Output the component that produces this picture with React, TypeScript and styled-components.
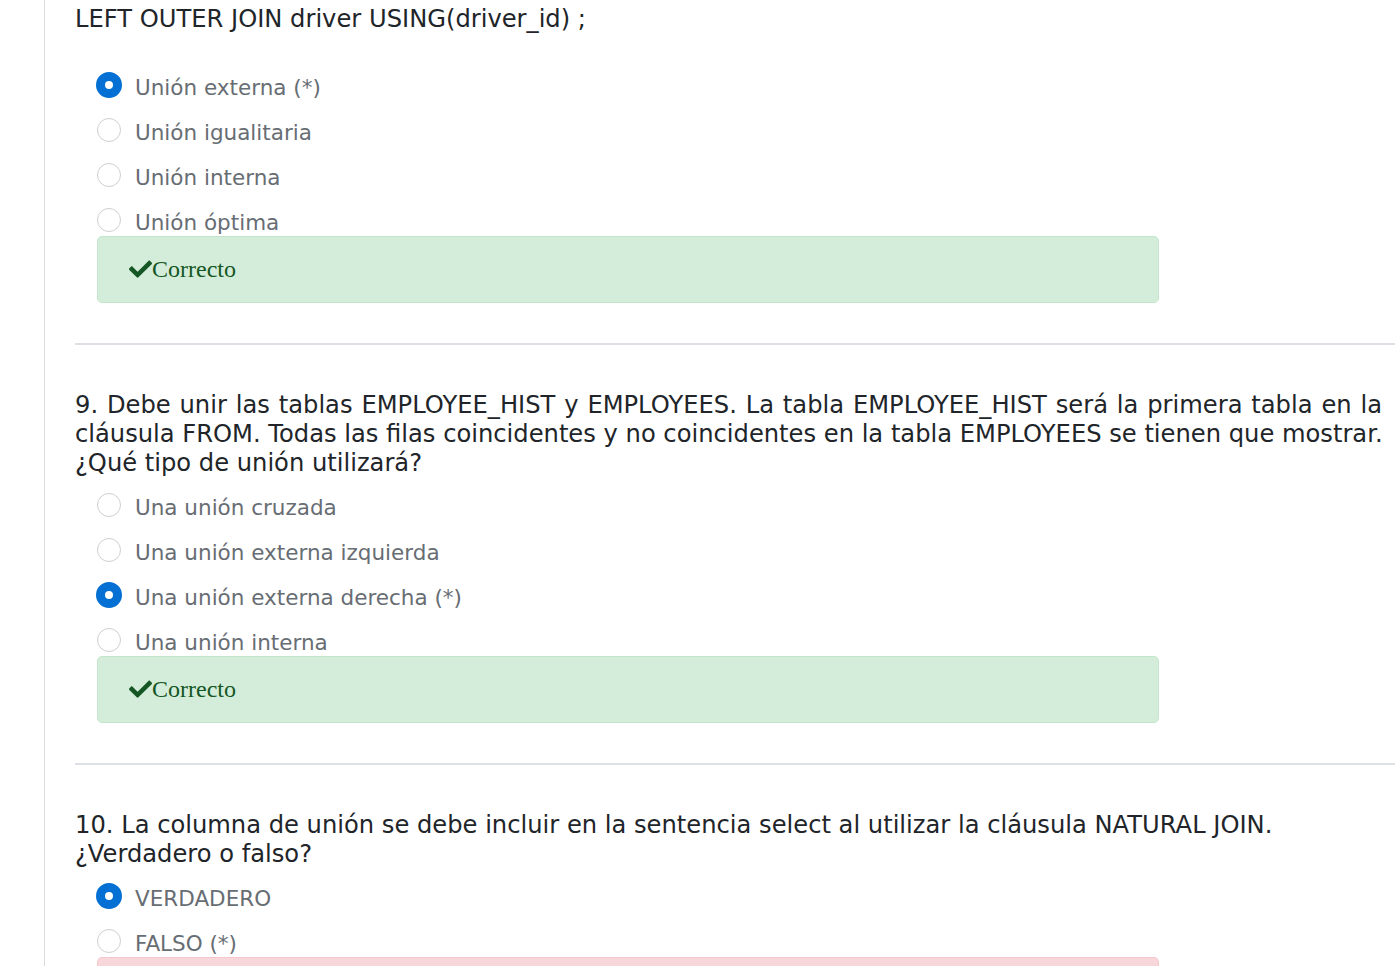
import React from "react";
import styled, { createGlobalStyle } from "styled-components";

const Global = createGlobalStyle`
  html, body { margin: 0; padding: 0; background: #fff; }
  body { font-family: "DejaVu Sans", Verdana, sans-serif; overflow: hidden; }
`;

const Page = styled.div`
  display: flex;
  min-height: 966px;
`;

const Gutter = styled.div`
  width: 44px;
  flex-shrink: 0;
  border-right: 1px solid #dcdcdc;
`;

const Content = styled.div`
  flex: 1;
  padding: 5px 0 0 30px;
  display: flex;
  flex-direction: column;
`;

const Question = styled.section`
  display: flex;
  flex-direction: column;
`;

const QText = styled.div<{ $gap: number }>`
  margin: 0 0 ${(p) => p.$gap}px 0;
  width: 1307px;
  font-size: 24.2px;
  line-height: 29px;
  color: #212529;
`;

const QLine = styled.span<{ $full: boolean }>`
  display: block;
  white-space: nowrap;
  text-align: left;
  text-align-last: ${(p) => (p.$full ? "justify" : "left")};
`;

const Options = styled.div`
  display: flex;
  flex-direction: column;
  gap: 15px;
  padding-left: 22px;
`;

const Option = styled.label`
  display: flex;
  align-items: center;
  gap: 14px;
  height: 30px;
  font-size: 21.5px;
  line-height: 30px;
  color: #676d73;
`;

const OptionText = styled.span`
  position: relative;
  top: 1px;
`;

const Radio = styled.span<{ $checked: boolean }>`
  border-radius: 50%;
  box-sizing: border-box;
  flex-shrink: 0;
  margin-top: -4px;
  background: #fff;
  width: ${(p) => (p.$checked ? 26 : 24)}px;
  height: ${(p) => (p.$checked ? 26 : 24)}px;
  margin-left: ${(p) => (p.$checked ? -1 : 0)}px;
  margin-right: ${(p) => (p.$checked ? -1 : 0)}px;
  border: ${(p) => (p.$checked ? "9px solid #0570d4" : "1px solid #cfcfcf")};
`;

const Feedback = styled.div<{ $ok: boolean }>`
  margin: -1px 0 0 22px;
  width: 1062px;
  height: 67px;
  flex-shrink: 0;
  box-sizing: border-box;
  border-radius: 5px;
  border: 1px solid ${(p) => (p.$ok ? "#c3e6cb" : "#f5c6cb")};
  background: ${(p) => (p.$ok ? "#d4edda" : "#f8d7da")};
  color: ${(p) => (p.$ok ? "#155724" : "#721c24")};
  display: flex;
  align-items: center;
  padding-left: 31px;
  font-family: "Liberation Serif", "Times New Roman", serif;
  font-size: 24px;
`;

const Divider = styled.hr`
  margin: 40px 0 46px 0;
  border: 0;
  height: 2px;
  background: #dde1e5;
`;

const Check = () => (
  <svg width="23" height="19" viewBox="0 0 512 420" style={{ marginTop: -2 }}>
    <path
      fill="#155724"
      d="M173.9 407.4L7.5 241c-10-10-10-26.2 0-36.2l36.2-36.2c10-10 26.2-10 36.2 0L192 280.7 432.1 40.6c10-10 26.2-10 36.2 0l36.2 36.2c10 10 10 26.2 0 36.2L210.1 407.4c-10 10-26.2 10-36.2 0z"
    />
  </svg>
);

type Q = {
  lines: { text: string; full?: boolean }[];
  gap: number;
  options: { label: string; checked?: boolean }[];
  ok: boolean;
  last?: boolean;
};

const questions: Q[] = [
  {
    lines: [{ text: "LEFT OUTER JOIN driver USING(driver_id) ;" }],
    gap: 38,
    options: [
      { label: "Unión externa (*)", checked: true },
      { label: "Unión igualitaria" },
      { label: "Unión interna" },
      { label: "Unión óptima" },
    ],
    ok: true,
  },
  {
    lines: [
      {
        text: "9. Debe unir las tablas EMPLOYEE_HIST y EMPLOYEES. La tabla EMPLOYEE_HIST será la primera tabla en la",
        full: true,
      },
      {
        text: "cláusula FROM. Todas las filas coincidentes y no coincidentes en la tabla EMPLOYEES se tienen que mostrar.",
        full: true,
      },
      { text: "¿Qué tipo de unión utilizará?" },
    ],
    gap: 14,
    options: [
      { label: "Una unión cruzada" },
      { label: "Una unión externa izquierda" },
      { label: "Una unión externa derecha (*)", checked: true },
      { label: "Una unión interna" },
    ],
    ok: true,
  },
  {
    lines: [
      { text: "10. La columna de unión se debe incluir en la sentencia select al utilizar la cláusula NATURAL JOIN." },
      { text: "¿Verdadero o falso?" },
    ],
    gap: 14,
    options: [{ label: "VERDADERO", checked: true }, { label: "FALSO (*)" }],
    ok: false,
    last: true,
  },
];

export default function App() {
  return (
    <>
      <Global />
      <Page>
        <Gutter />
        <Content>
          {questions.map((q, i) => (
            <Question key={i}>
              <QText $gap={q.gap}>
                {q.lines.map((l, k) => (
                  <QLine key={k} $full={!!l.full}>
                    {l.text}
                  </QLine>
                ))}
              </QText>
              <Options>
                {q.options.map((o, j) => (
                  <Option key={j}>
                    <Radio $checked={!!o.checked} />
                    <OptionText>{o.label}</OptionText>
                  </Option>
                ))}
              </Options>
              <Feedback $ok={q.ok}>
                {q.ok ? (
                  <>
                    <Check />
                    Correcto
                  </>
                ) : (
                  <>Incorrecto</>
                )}
              </Feedback>
              {!q.last && <Divider />}
            </Question>
          ))}
        </Content>
      </Page>
    </>
  );
}
